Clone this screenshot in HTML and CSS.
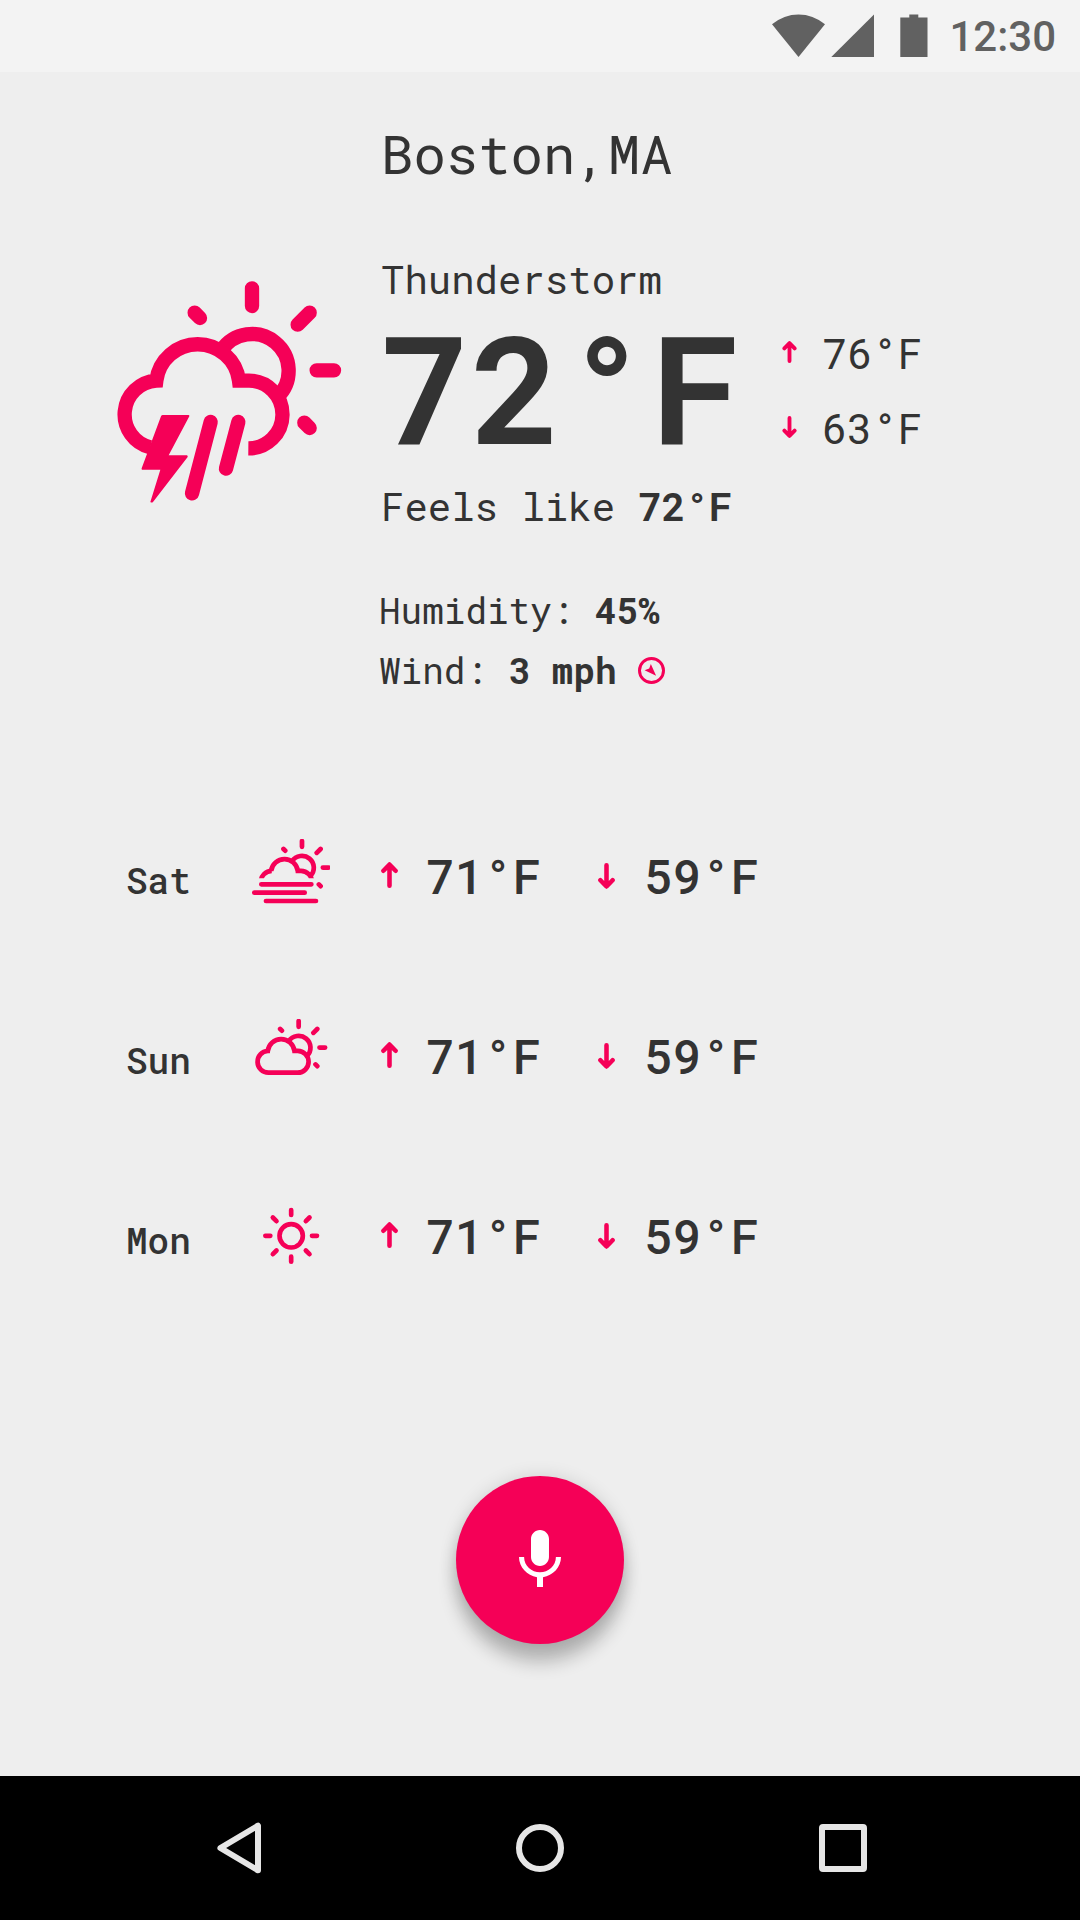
FILE: index.html
```html
<!DOCTYPE html>
<html lang="en">
<head>
<meta charset="utf-8">
<title>Weather</title>
<link rel="stylesheet" href="styles.css">
</head>
<body>
<svg class="defs" width="0" height="0" aria-hidden="true">
  <defs>
    <g id="sun-behind">
      <path d="M363.2 271.3A110 110 0 1 1 531.8 410.7"/>
      <path stroke-linecap="round" d="M455 85v53M628 158l-36 36M649 331h52M283 158l16 16M612 488l16 16"/>
    </g>
    <symbol id="arrow-up" viewBox="0 0 50 77">
      <path d="M25 8v62M7 26L25 7.500L43 26" fill="none" stroke="currentColor" stroke-width="13.500" stroke-linecap="round" stroke-linejoin="round"/>
    </symbol>
    <symbol id="arrow-down" viewBox="0 0 50 77">
      <path d="M25 7v62M7 51L25 69.500L43 51" fill="none" stroke="currentColor" stroke-width="13.500" stroke-linecap="round" stroke-linejoin="round"/>
    </symbol>
  </defs>
</svg>

<div class="screen">
  <header class="status-bar">
    <svg class="status-icons" viewBox="0 0 156 44">
      <path d="M0 10.300Q12 .5 26.500 .5T53 10.300L26.500 43Z"/>
      <path d="M59.300 43H102V.5Z"/>
      <path d="M128.300 3.600h9V.5h9v3.100h9.200V43h-27.200Z"/>
    </svg>
    <span class="clock">12:30</span>
  </header>

  <main class="weather">
    <h1 class="city">Boston,MA</h1>

    <section class="current">
      <svg class="current-icon" viewBox="50 60 675 672">
        <g fill="none" stroke="currentColor" stroke-width="43">
          <use href="#sun-behind"/>
          <path d="M150 562A101.600 101.600 0 0 1 168 362A125 125 0 0 1 416 362H446A101.500 101.500 0 0 1 444 565"/>
          <path stroke-linecap="round" d="M331 486L275 700M414 486L377 626"/>
        </g>
        <path fill="currentColor" d="M187 465H265Q268 466 267 469L205 586H260Q263 588 262 591L158 726Q154 729 150 726L180 629H125Q123 628 124 625L182 469Q184 465 187 465Z"/>
      </svg>
      <div class="reading">
        <p class="condition">Thunderstorm</p>
        <p class="temp-now">72°F</p>
        <p class="feels">Feels like <b>72°F</b></p>
      </div>
      <div class="range">
        <div class="range-row"><svg class="arrow"><use href="#arrow-up"/></svg><span>76°F</span></div>
        <div class="range-row"><svg class="arrow"><use href="#arrow-down"/></svg><span>63°F</span></div>
      </div>
    </section>

    <section class="details">
      <p>Humidity: <b>45%</b></p>
      <p>Wind: <b>3 mph</b> <svg class="wind-icon" viewBox="0 0 82 82"><circle cx="41" cy="41" r="36.500" fill="none" stroke="currentColor" stroke-width="9"/><path fill="currentColor" d="M39 21L55 57L20 40L34 35Z"/></svg></p>
    </section>

    <section class="forecast">
      <div class="day-row">
        <span class="day">Sat</span>
        <svg class="day-icon" viewBox="-9.900 65.400 725.400 613.800">
          <clipPath id="above-fog"><path d="M-10 60H725V431H-10Z"/></clipPath>
          <g fill="none" stroke="currentColor" stroke-width="44">
            <use href="#sun-behind"/>
            <path clip-path="url(#above-fog)" d="M73 464A101 101 0 0 1 174 362H168A125 125 0 0 1 416 362H446A101 101 0 0 1 547 464"/>
            <path stroke-linecap="round" d="M77 487H542M12 564.500H480M120 642H585"/>
          </g>
        </svg>
        <svg class="arrow"><use href="#arrow-up"/></svg>
        <span>71°F</span>
        <svg class="arrow low"><use href="#arrow-down"/></svg>
        <span>59°F</span>
      </div>
      <div class="day-row">
        <span class="day">Sun</span>
        <svg class="day-icon" viewBox="21.100 65.400 725.400 613.800">
          <g fill="none" stroke="currentColor" stroke-width="44">
            <use href="#sun-behind"/>
            <path d="M174 565A101.500 101.500 0 0 1 168 362.200A125 125 0 0 1 416 362H446A101.500 101.500 0 0 1 446 565Z"/>
          </g>
        </svg>
        <svg class="arrow"><use href="#arrow-up"/></svg>
        <span>71°F</span>
        <svg class="arrow low"><use href="#arrow-down"/></svg>
        <span>59°F</span>
      </div>
      <div class="day-row">
        <span class="day">Mon</span>
        <svg class="day-icon" viewBox="426 54 234 198">
          <g fill="none" stroke="currentColor" stroke-width="14" stroke-linecap="round">
            <circle cx="543.500" cy="164.500" r="35"/>
            <path d="M543.500 87v15M543.500 227v15M466 164.500h15M606 164.500h15M488.500 109.500l11 11M598.500 109.500l-11 11M488.500 219.500l11-11M598.500 219.500l-11-11"/>
          </g>
        </svg>
        <svg class="arrow"><use href="#arrow-up"/></svg>
        <span>71°F</span>
        <svg class="arrow low"><use href="#arrow-down"/></svg>
        <span>59°F</span>
      </div>
    </section>

    <button class="mic-button" aria-label="Speak">
      <svg viewBox="0 0 24 24" width="72" height="72"><path fill="#fff" d="M12 14c1.660 0 2.990-1.340 2.990-3L15 5c0-1.660-1.340-3-3-3S9 3.340 9 5v6c0 1.660 1.340 3 3 3zm5.300-3c0 3-2.540 5.100-5.300 5.100S6.700 14 6.700 11H5c0 3.410 2.720 6.230 6 6.720V21h2v-3.280c3.280-.48 6-3.300 6-6.720h-1.700z"/></svg>
    </button>
  </main>

  <nav class="nav-bar">
    <svg viewBox="0 0 54 54"><path d="M48 4.700V49.300L10.400 27Z"/></svg>
    <svg viewBox="0 0 54 54"><circle cx="27" cy="27" r="21"/></svg>
    <svg viewBox="0 0 54 54"><rect x="6" y="6" width="42" height="42" rx="1"/></svg>
  </nav>
</div>
</body>
</html>
```
FILE: styles.css
```css
* {
  box-sizing: border-box;
}

body {
  margin: 0;
  background: #eee;
  color: #333;
  font-family: "Roboto Mono", "DejaVu Sans Mono", monospace;
}

h1, p {
  margin: 0;
  font-weight: 400;
}

svg {
  display: block;
  flex: none;
}

.defs {
  position: absolute;
}

.screen {
  display: flex;
  flex-direction: column;
  width: 1080px;
  height: 1920px;
  overflow: hidden;
}

/* Status bar */
.status-bar {
  display: flex;
  justify-content: flex-end;
  align-items: center;
  gap: 21px;
  height: 72px;
  padding-right: 24px;
  background: #f3f3f3;
  color: #616161;
}

.status-icons {
  width: 156px;
  height: 44px;
  fill: currentColor;
}

.clock {
  padding-top: 2px;
  font: 500 42px/70px Roboto, sans-serif;
}

/* Current conditions */
.weather {
  flex: 1;
  display: flex;
  flex-direction: column;
  padding-top: 45px;
}

.city {
  padding-left: 381px;
  font-size: 54px;
  line-height: 72px;
}

.current {
  display: grid;
  grid-template-columns: 264px 401px auto;
  margin-top: 66px;
  padding-left: 117px;
}

.current-icon {
  width: 225px;
  height: 224px;
  margin-top: 25px;
  color: #f50057;
}

.condition,
.feels {
  font-size: 39px;
  line-height: 48px;
}

.temp-now {
  margin: 8px 0 21px;
  font-size: 150px;
  font-weight: 700;
  line-height: 150px;
}

.range {
  padding-top: 60px;
}

.range-row {
  display: flex;
  align-items: center;
  gap: 25px;
  height: 75px;
  font-size: 42px;
}

.arrow {
  width: 17px;
  height: 26px;
  color: #f50057;
}

.range-row .arrow {
  width: 15px;
  height: 22px;
  margin-top: -1px;
}

.details {
  margin-top: 50px;
  padding-left: 379px;
  font-size: 36px;
}

.details p {
  height: 60px;
  line-height: 60px;
}

.wind-icon {
  display: inline-block;
  width: 27px;
  height: 27px;
  vertical-align: 0;
  color: #f50057;
}

/* Forecast */
.forecast {
  margin-top: 85px;
  padding-left: 126px;
}

.day-row {
  display: grid;
  grid-template-columns: 126px 129px 45px 173px 45px auto;
  align-items: center;
  height: 180px;
  font-size: 48px;
  font-weight: 500;
}

.day {
  padding-top: 10px;
  font-size: 36px;
}

.day-icon {
  align-self: start;
  width: 78px;
  height: 66px;
  margin-top: 54px;
  color: #f50057;
}

.arrow.low {
  margin: 1px 0 0 -1px;
}

/* Voice button */
.mic-button {
  display: grid;
  place-items: center;
  align-self: center;
  width: 168px;
  height: 168px;
  margin-top: 151px;
  padding: 0;
  border: 0;
  border-radius: 50%;
  background: #f50057;
  box-shadow: 0 18px 18px rgba(0, 0, 0, .24), 0 0 18px rgba(0, 0, 0, .12);
}

/* Navigation bar */
.nav-bar {
  display: flex;
  justify-content: center;
  align-items: center;
  gap: 249px;
  height: 144px;
  background: #000;
}

.nav-bar svg {
  width: 54px;
  height: 54px;
  fill: none;
  stroke: #e6e6e6;
  stroke-width: 6;
  stroke-linejoin: round;
}
```
